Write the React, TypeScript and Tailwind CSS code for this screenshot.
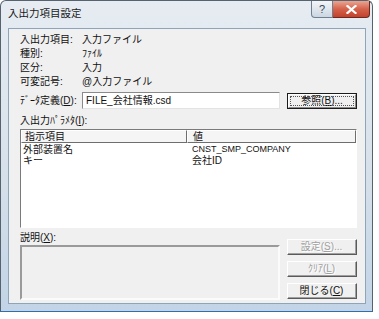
import type { ReactNode } from "react";

// underlined access key letter
const K = ({ c }: { c: string }) => <span className="underline underline-offset-[1px]">{c}</span>;

function Btn({ children, disabled, focused }: { children: ReactNode; disabled?: boolean; focused?: boolean }) {
  return (
    <div
      className={
        "flex h-[16px] w-[70px] items-center justify-center border " +
        (focused ? "border-[#1b1b1b]" : "border-t-[#fff] border-l-[#fff] border-b-[#5a5a5a] border-r-[#5a5a5a]") +
        " bg-[#f0f0f0]"
      }
    >
      <div
        className={
          "flex h-full w-full items-center justify-center " +
          (focused
            ? "border border-t-[#fff] border-l-[#fff] border-b-[#8a8a8a] border-r-[#8a8a8a]"
            : "border-b border-r border-b-[#a0a0a0] border-r-[#a0a0a0]")
        }
      >
        <div
          className={
            "flex h-full w-full items-center justify-center leading-none " +
            (focused ? "outline outline-1 outline-dotted outline-[#555] -outline-offset-2" : "") +
            (disabled ? " text-[#a0a0a0] [text-shadow:1px_1px_0_#fff]" : " text-[#111]")
          }
        >
          {children}
        </div>
      </div>
    </div>
  );
}

const info = [
  { label: "入出力項目:", value: "入力ファイル" },
  { label: "種別:", value: "ﾌｧｲﾙ" },
  { label: "区分:", value: "入力" },
  { label: "可変記号:", value: "@入力ファイル" },
];

const params = [
  { name: "外部装置名", value: "CNST_SMP_COMPANY", small: true },
  { name: "キー", value: "会社ID", small: false },
];

export default function App() {
  return (
    <div className="h-[319px] w-[379px] bg-white font-['Liberation_Sans','Noto_Sans_CJK_JP',sans-serif] text-[10px] text-[#111]">
      {/* window frame */}
      <div className="flex h-[312px] w-[373px] flex-col rounded-t-[6px] border border-[#56636f] border-b-[#2f6fb0] bg-gradient-to-b from-[#e6ecf2] via-[#d9e2eb] to-[#c2d4e6]">
        {/* title bar */}
        <div className="flex h-[27px] items-start">
          <div className="pl-[7px] pt-[5px] text-[10.5px] leading-[14px] text-[#1a1a1a]">入出力項目設定</div>
          <div className="ml-auto mr-[2px] flex">
            <div className="flex h-[17px] w-[22px] items-center justify-center rounded-bl-[4px] border border-t-0 border-[#6f7f8f] bg-gradient-to-b from-[#f3f6f9] to-[#cbd6e1] text-[11px] leading-none text-[#3a4654]">
              ?
            </div>
            <div className="flex h-[17px] w-[37px] items-center justify-center rounded-br-[4px] border border-l-0 border-t-0 border-[#6b2a20] bg-gradient-to-b from-[#e8a593] via-[#d5624b] to-[#c2412c]">
              <svg width="11" height="9" viewBox="0 0 11 9">
                <path d="M1.5 1 L9.5 8 M9.5 1 L1.5 8" stroke="#fff" strokeWidth="2.2" strokeLinecap="square" />
              </svg>
            </div>
          </div>
        </div>

        {/* client area */}
        <div className="ml-[7px] flex h-[276px] w-[358px] flex-col border border-[#8ea4ba] bg-[#f0f0f0] pl-[11px] pr-[8px] pt-[4px]">
          {info.map((r) => (
            <div key={r.label} className="flex h-[14px] items-center leading-[14px]">
              <div className="w-[62px]">{r.label}</div>
              <div>{r.value}</div>
            </div>
          ))}

          <div className="mt-[3px] flex h-[17px] items-center">
            <div className="w-[62px]">
              ﾃﾞｰﾀ定義(<K c="D" />):
            </div>
            <div className="flex h-[17px] w-[198px] items-center border border-t-[#8a8a8a] border-l-[#8a8a8a] border-b-[#e3e3e3] border-r-[#e3e3e3] bg-white pl-[3px]">
              FILE_会社情報.csd
            </div>
            <div className="ml-[7px]">
              <Btn focused>
                参照(<K c="B" />)...
              </Btn>
            </div>
          </div>

          <div className="mt-[4px] flex h-[14px] items-center">
            入出力ﾊﾟﾗﾒﾀ(<K c="I" />):
          </div>

          {/* parameter list */}
          <div className="mt-[2px] flex h-[99px] flex-col border border-t-[#7a7a7a] border-l-[#7a7a7a] border-b-[#fff] border-r-[#fff] bg-white">
            <div className="flex h-[13px] text-[#111]">
              <div className="flex w-[166px] items-center border border-t-[#fff] border-l-[#fff] border-b-[#6e6e6e] border-r-[#6e6e6e] bg-[#f5f5f5] pl-[3px] leading-none">
                指示項目
              </div>
              <div className="flex flex-1 items-center border border-t-[#fff] border-l-[#fff] border-b-[#6e6e6e] border-r-[#6e6e6e] bg-[#f5f5f5] pl-[5px] leading-none">
                値
              </div>
            </div>
            <div className="pt-[1px]">
              {params.map((p) => (
                <div key={p.name} className="flex h-[11px] items-center leading-[11px]">
                  <div className="w-[166px] pl-[2px]">{p.name}</div>
                  <div className={p.small ? "pl-[5px] text-[9px]" : "pl-[5px]"}>{p.value}</div>
                </div>
              ))}
            </div>
          </div>

          {/* description + buttons */}
          <div className="mt-[2px] flex">
            <div className="flex w-[260px] flex-col">
              <div className="flex h-[14px] items-center">
                説明(<K c="X" />):
              </div>
              <div className="mt-[1px] h-[55px] border-2 border-t-[#9a9a9a] border-l-[#9a9a9a] border-b-[#fbfbfb] border-r-[#fbfbfb] bg-[#f0f0f0]" />
            </div>
            <div className="ml-[7px] mt-[9px] flex flex-col gap-[6px]">
              <Btn disabled>
                設定(<K c="S" />)...
              </Btn>
              <Btn disabled>
                ｸﾘｱ(<K c="L" />)
              </Btn>
              <Btn>
                閉じる(<K c="C" />)
              </Btn>
            </div>
          </div>
        </div>
      </div>
    </div>
  );
}
